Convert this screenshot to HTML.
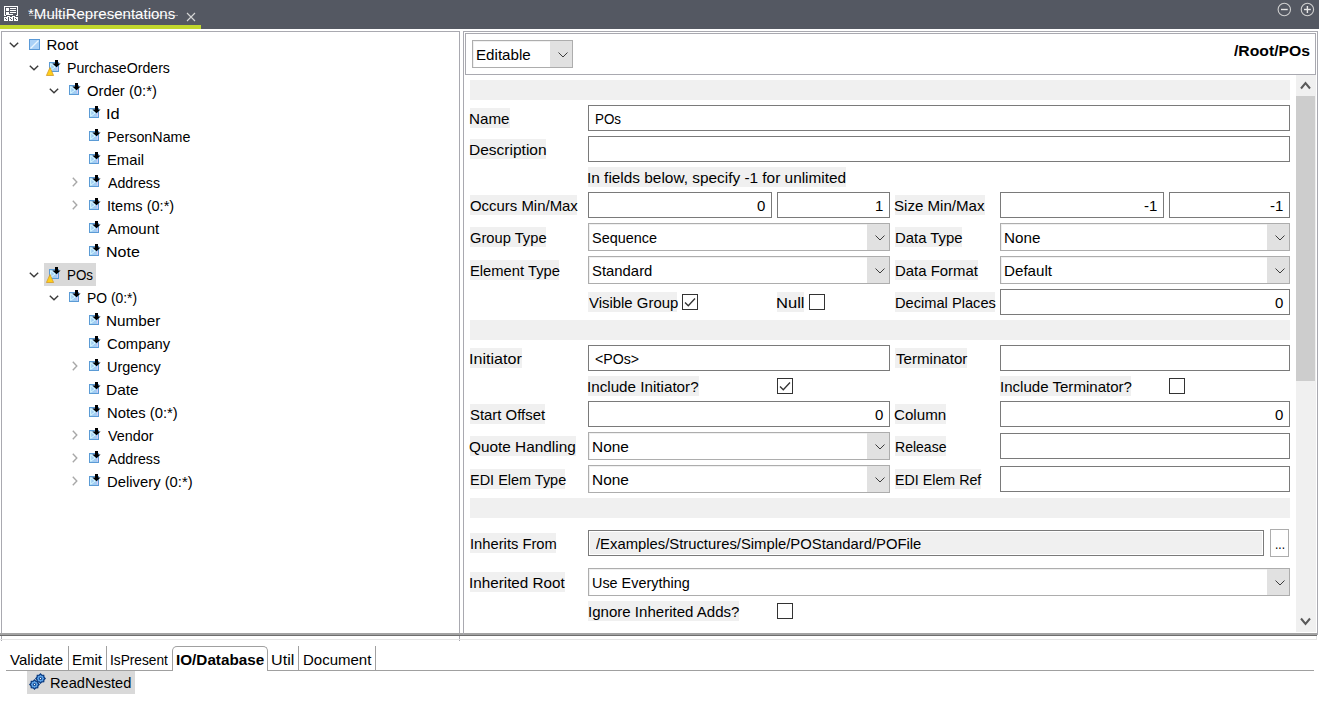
<!DOCTYPE html>
<html><head><meta charset="utf-8"><style>
html,body{margin:0;padding:0;width:1319px;height:722px;overflow:hidden;background:#fff;position:relative}
.a{position:absolute}
.t{font:15px/20px "Liberation Sans", sans-serif;white-space:nowrap;transform-origin:0 0}
svg{overflow:visible}
</style></head><body>
<div class="a" style="left:0px;top:0px;width:1319px;height:29px;background:#545862;"></div>
<div class="a" style="left:0px;top:25px;width:201px;height:4px;background:#c1d72e;"></div>
<svg class="a" style="left:0px;top:0px" width="24" height="24" viewBox="0 0 24 24" shape-rendering="crispEdges">
<path d="M4 6 H18 V7 H4 Z M4 6 H5 V15 H4 Z M17 6 H18 V15 H17 Z" fill="#fff"/>
<path d="M4 15 H6 V16 H4 Z M16 15 H18 V16 H16 Z M9 14 H13 V15 H9 Z M7 16 H10 V17 H7 Z M12 16 H15 V17 H12 Z" fill="#fff"/>
<rect x="6" y="8" width="3" height="3" fill="#fff"/><rect x="6" y="12" width="3" height="3" fill="#fff"/>
<rect x="10" y="8" width="6" height="1" fill="#fff"/><rect x="10" y="10" width="6" height="1" fill="#fff"/><rect x="10" y="12" width="6" height="1" fill="#fff"/>
<rect x="4" y="17" width="4" height="4" fill="#fff"/><rect x="9" y="17" width="4" height="4" fill="#fff"/><rect x="14" y="17" width="4" height="4" fill="#fff"/>
<rect x="5" y="18" width="1" height="1" fill="#545862"/><rect x="6" y="19" width="1" height="1" fill="#545862"/>
<rect x="10" y="18" width="1" height="1" fill="#545862"/><rect x="11" y="19" width="1" height="1" fill="#545862"/>
<rect x="15" y="18" width="1" height="1" fill="#545862"/><rect x="16" y="19" width="1" height="1" fill="#545862"/>
</svg>
<div class="a" style="left:29px;top:15px;width:149px;height:1px;background:rgba(220,220,220,0.55);"></div>
<svg class="a" style="left:186px;top:12px" width="10" height="10" viewBox="0 0 10 10">
<path d="M1 1 L9 9 M9 1 L1 9" stroke="#d6d6d6" stroke-width="1.1"/></svg>
<svg class="a" style="left:1270px;top:0px" width="49" height="20" viewBox="0 0 49 20">
<circle cx="14.3" cy="9.5" r="6.2" fill="none" stroke="#cfcfcf" stroke-width="1.1"/>
<line x1="11" y1="9.5" x2="17.7" y2="9.5" stroke="#e6e6e6" stroke-width="1.4"/>
<circle cx="37.4" cy="9.5" r="6.2" fill="none" stroke="#cfcfcf" stroke-width="1.1"/>
<line x1="34" y1="9.5" x2="40.8" y2="9.5" stroke="#e6e6e6" stroke-width="1.4"/>
<line x1="37.4" y1="6" x2="37.4" y2="13" stroke="#e6e6e6" stroke-width="1.4"/>
</svg>
<div class="a" style="left:1px;top:31px;width:459px;height:610px;box-sizing:border-box;border:1px solid #a9a9b0;border-bottom:none;"></div>
<div class="a" style="left:44px;top:263px;width:52px;height:23px;background:#d9d9d9;"></div>
<svg class="a" style="left:9px;top:42px" width="10" height="6" viewBox="0 0 10 6"><path d="M0.8 0.8 L5 4.8 L9.2 0.8" fill="none" stroke="#3a3a3a" stroke-width="1.4"/></svg>
<svg class="a" style="left:29px;top:39px" width="11" height="11" viewBox="0 0 11 11">
<rect x="0.5" y="0.5" width="10" height="10" fill="#a9d1f7" stroke="#5a9ad8"/>
<path d="M1.5 9.5 L9.5 1.5" stroke="#e8f6ff" stroke-width="1.2"/></svg>
<svg class="a" style="left:29px;top:65px" width="10" height="6" viewBox="0 0 10 6"><path d="M0.8 0.8 L5 4.8 L9.2 0.8" fill="none" stroke="#3a3a3a" stroke-width="1.4"/></svg>
<svg class="a" style="left:49px;top:60px" width="12" height="12" viewBox="0 0 12 12">
<rect x="0.5" y="2.5" width="9" height="9" fill="#a3cdf3" stroke="#5b9bd5"/>
<path d="M1.7 3.7 V10.3 M1.7 3.7 L6.3 7.2 M1.7 10.3 L6.3 6.8" fill="none" stroke="#d8fbff" stroke-width="1"/>
<path d="M8.5 10.5 V7" stroke="#d9c8f5" stroke-width="1"/>
<path d="M6 0 H9 V3.5 H11.6 L7.5 7.3 L3.4 3.5 H6 Z" fill="#000"/></svg>
<svg class="a" style="left:46px;top:67px" width="8" height="9" viewBox="0 0 8 9">
<path d="M4 0.5 L7.6 8.5 H0.4 Z" fill="#ffcf1a" stroke="#d49a2a" stroke-width="0.8"/></svg>
<svg class="a" style="left:49px;top:88px" width="10" height="6" viewBox="0 0 10 6"><path d="M0.8 0.8 L5 4.8 L9.2 0.8" fill="none" stroke="#3a3a3a" stroke-width="1.4"/></svg>
<svg class="a" style="left:69px;top:83px" width="12" height="12" viewBox="0 0 12 12">
<rect x="0.5" y="2.5" width="9" height="9" fill="#a3cdf3" stroke="#5b9bd5"/>
<path d="M1.7 3.7 V10.3 M1.7 3.7 L6.3 7.2 M1.7 10.3 L6.3 6.8" fill="none" stroke="#d8fbff" stroke-width="1"/>
<path d="M8.5 10.5 V7" stroke="#d9c8f5" stroke-width="1"/>
<path d="M6 0 H9 V3.5 H11.6 L7.5 7.3 L3.4 3.5 H6 Z" fill="#000"/></svg>
<svg class="a" style="left:89px;top:106px" width="12" height="12" viewBox="0 0 12 12">
<rect x="0.5" y="2.5" width="9" height="9" fill="#a3cdf3" stroke="#5b9bd5"/>
<path d="M1.7 3.7 V10.3 M1.7 3.7 L6.3 7.2 M1.7 10.3 L6.3 6.8" fill="none" stroke="#d8fbff" stroke-width="1"/>
<path d="M8.5 10.5 V7" stroke="#d9c8f5" stroke-width="1"/>
<path d="M6 0 H9 V3.5 H11.6 L7.5 7.3 L3.4 3.5 H6 Z" fill="#000"/></svg>
<svg class="a" style="left:89px;top:129px" width="12" height="12" viewBox="0 0 12 12">
<rect x="0.5" y="2.5" width="9" height="9" fill="#a3cdf3" stroke="#5b9bd5"/>
<path d="M1.7 3.7 V10.3 M1.7 3.7 L6.3 7.2 M1.7 10.3 L6.3 6.8" fill="none" stroke="#d8fbff" stroke-width="1"/>
<path d="M8.5 10.5 V7" stroke="#d9c8f5" stroke-width="1"/>
<path d="M6 0 H9 V3.5 H11.6 L7.5 7.3 L3.4 3.5 H6 Z" fill="#000"/></svg>
<svg class="a" style="left:89px;top:152px" width="12" height="12" viewBox="0 0 12 12">
<rect x="0.5" y="2.5" width="9" height="9" fill="#a3cdf3" stroke="#5b9bd5"/>
<path d="M1.7 3.7 V10.3 M1.7 3.7 L6.3 7.2 M1.7 10.3 L6.3 6.8" fill="none" stroke="#d8fbff" stroke-width="1"/>
<path d="M8.5 10.5 V7" stroke="#d9c8f5" stroke-width="1"/>
<path d="M6 0 H9 V3.5 H11.6 L7.5 7.3 L3.4 3.5 H6 Z" fill="#000"/></svg>
<svg class="a" style="left:72px;top:177px" width="6" height="10" viewBox="0 0 6 10"><path d="M0.8 0.8 L4.8 5 L0.8 9.2" fill="none" stroke="#a8a8a8" stroke-width="1.4"/></svg>
<svg class="a" style="left:89px;top:175px" width="12" height="12" viewBox="0 0 12 12">
<rect x="0.5" y="2.5" width="9" height="9" fill="#a3cdf3" stroke="#5b9bd5"/>
<path d="M1.7 3.7 V10.3 M1.7 3.7 L6.3 7.2 M1.7 10.3 L6.3 6.8" fill="none" stroke="#d8fbff" stroke-width="1"/>
<path d="M8.5 10.5 V7" stroke="#d9c8f5" stroke-width="1"/>
<path d="M6 0 H9 V3.5 H11.6 L7.5 7.3 L3.4 3.5 H6 Z" fill="#000"/></svg>
<svg class="a" style="left:72px;top:200px" width="6" height="10" viewBox="0 0 6 10"><path d="M0.8 0.8 L4.8 5 L0.8 9.2" fill="none" stroke="#a8a8a8" stroke-width="1.4"/></svg>
<svg class="a" style="left:89px;top:198px" width="12" height="12" viewBox="0 0 12 12">
<rect x="0.5" y="2.5" width="9" height="9" fill="#a3cdf3" stroke="#5b9bd5"/>
<path d="M1.7 3.7 V10.3 M1.7 3.7 L6.3 7.2 M1.7 10.3 L6.3 6.8" fill="none" stroke="#d8fbff" stroke-width="1"/>
<path d="M8.5 10.5 V7" stroke="#d9c8f5" stroke-width="1"/>
<path d="M6 0 H9 V3.5 H11.6 L7.5 7.3 L3.4 3.5 H6 Z" fill="#000"/></svg>
<svg class="a" style="left:89px;top:221px" width="12" height="12" viewBox="0 0 12 12">
<rect x="0.5" y="2.5" width="9" height="9" fill="#a3cdf3" stroke="#5b9bd5"/>
<path d="M1.7 3.7 V10.3 M1.7 3.7 L6.3 7.2 M1.7 10.3 L6.3 6.8" fill="none" stroke="#d8fbff" stroke-width="1"/>
<path d="M8.5 10.5 V7" stroke="#d9c8f5" stroke-width="1"/>
<path d="M6 0 H9 V3.5 H11.6 L7.5 7.3 L3.4 3.5 H6 Z" fill="#000"/></svg>
<svg class="a" style="left:89px;top:244px" width="12" height="12" viewBox="0 0 12 12">
<rect x="0.5" y="2.5" width="9" height="9" fill="#a3cdf3" stroke="#5b9bd5"/>
<path d="M1.7 3.7 V10.3 M1.7 3.7 L6.3 7.2 M1.7 10.3 L6.3 6.8" fill="none" stroke="#d8fbff" stroke-width="1"/>
<path d="M8.5 10.5 V7" stroke="#d9c8f5" stroke-width="1"/>
<path d="M6 0 H9 V3.5 H11.6 L7.5 7.3 L3.4 3.5 H6 Z" fill="#000"/></svg>
<svg class="a" style="left:29px;top:272px" width="10" height="6" viewBox="0 0 10 6"><path d="M0.8 0.8 L5 4.8 L9.2 0.8" fill="none" stroke="#3a3a3a" stroke-width="1.4"/></svg>
<svg class="a" style="left:49px;top:267px" width="12" height="12" viewBox="0 0 12 12">
<rect x="0.5" y="2.5" width="9" height="9" fill="#a3cdf3" stroke="#5b9bd5"/>
<path d="M1.7 3.7 V10.3 M1.7 3.7 L6.3 7.2 M1.7 10.3 L6.3 6.8" fill="none" stroke="#d8fbff" stroke-width="1"/>
<path d="M8.5 10.5 V7" stroke="#d9c8f5" stroke-width="1"/>
<path d="M6 0 H9 V3.5 H11.6 L7.5 7.3 L3.4 3.5 H6 Z" fill="#000"/></svg>
<svg class="a" style="left:46px;top:274px" width="8" height="9" viewBox="0 0 8 9">
<path d="M4 0.5 L7.6 8.5 H0.4 Z" fill="#ffcf1a" stroke="#d49a2a" stroke-width="0.8"/></svg>
<svg class="a" style="left:49px;top:295px" width="10" height="6" viewBox="0 0 10 6"><path d="M0.8 0.8 L5 4.8 L9.2 0.8" fill="none" stroke="#3a3a3a" stroke-width="1.4"/></svg>
<svg class="a" style="left:69px;top:290px" width="12" height="12" viewBox="0 0 12 12">
<rect x="0.5" y="2.5" width="9" height="9" fill="#a3cdf3" stroke="#5b9bd5"/>
<path d="M1.7 3.7 V10.3 M1.7 3.7 L6.3 7.2 M1.7 10.3 L6.3 6.8" fill="none" stroke="#d8fbff" stroke-width="1"/>
<path d="M8.5 10.5 V7" stroke="#d9c8f5" stroke-width="1"/>
<path d="M6 0 H9 V3.5 H11.6 L7.5 7.3 L3.4 3.5 H6 Z" fill="#000"/></svg>
<svg class="a" style="left:89px;top:313px" width="12" height="12" viewBox="0 0 12 12">
<rect x="0.5" y="2.5" width="9" height="9" fill="#a3cdf3" stroke="#5b9bd5"/>
<path d="M1.7 3.7 V10.3 M1.7 3.7 L6.3 7.2 M1.7 10.3 L6.3 6.8" fill="none" stroke="#d8fbff" stroke-width="1"/>
<path d="M8.5 10.5 V7" stroke="#d9c8f5" stroke-width="1"/>
<path d="M6 0 H9 V3.5 H11.6 L7.5 7.3 L3.4 3.5 H6 Z" fill="#000"/></svg>
<svg class="a" style="left:89px;top:336px" width="12" height="12" viewBox="0 0 12 12">
<rect x="0.5" y="2.5" width="9" height="9" fill="#a3cdf3" stroke="#5b9bd5"/>
<path d="M1.7 3.7 V10.3 M1.7 3.7 L6.3 7.2 M1.7 10.3 L6.3 6.8" fill="none" stroke="#d8fbff" stroke-width="1"/>
<path d="M8.5 10.5 V7" stroke="#d9c8f5" stroke-width="1"/>
<path d="M6 0 H9 V3.5 H11.6 L7.5 7.3 L3.4 3.5 H6 Z" fill="#000"/></svg>
<svg class="a" style="left:72px;top:361px" width="6" height="10" viewBox="0 0 6 10"><path d="M0.8 0.8 L4.8 5 L0.8 9.2" fill="none" stroke="#a8a8a8" stroke-width="1.4"/></svg>
<svg class="a" style="left:89px;top:359px" width="12" height="12" viewBox="0 0 12 12">
<rect x="0.5" y="2.5" width="9" height="9" fill="#a3cdf3" stroke="#5b9bd5"/>
<path d="M1.7 3.7 V10.3 M1.7 3.7 L6.3 7.2 M1.7 10.3 L6.3 6.8" fill="none" stroke="#d8fbff" stroke-width="1"/>
<path d="M8.5 10.5 V7" stroke="#d9c8f5" stroke-width="1"/>
<path d="M6 0 H9 V3.5 H11.6 L7.5 7.3 L3.4 3.5 H6 Z" fill="#000"/></svg>
<svg class="a" style="left:89px;top:382px" width="12" height="12" viewBox="0 0 12 12">
<rect x="0.5" y="2.5" width="9" height="9" fill="#a3cdf3" stroke="#5b9bd5"/>
<path d="M1.7 3.7 V10.3 M1.7 3.7 L6.3 7.2 M1.7 10.3 L6.3 6.8" fill="none" stroke="#d8fbff" stroke-width="1"/>
<path d="M8.5 10.5 V7" stroke="#d9c8f5" stroke-width="1"/>
<path d="M6 0 H9 V3.5 H11.6 L7.5 7.3 L3.4 3.5 H6 Z" fill="#000"/></svg>
<svg class="a" style="left:89px;top:405px" width="12" height="12" viewBox="0 0 12 12">
<rect x="0.5" y="2.5" width="9" height="9" fill="#a3cdf3" stroke="#5b9bd5"/>
<path d="M1.7 3.7 V10.3 M1.7 3.7 L6.3 7.2 M1.7 10.3 L6.3 6.8" fill="none" stroke="#d8fbff" stroke-width="1"/>
<path d="M8.5 10.5 V7" stroke="#d9c8f5" stroke-width="1"/>
<path d="M6 0 H9 V3.5 H11.6 L7.5 7.3 L3.4 3.5 H6 Z" fill="#000"/></svg>
<svg class="a" style="left:72px;top:430px" width="6" height="10" viewBox="0 0 6 10"><path d="M0.8 0.8 L4.8 5 L0.8 9.2" fill="none" stroke="#a8a8a8" stroke-width="1.4"/></svg>
<svg class="a" style="left:89px;top:428px" width="12" height="12" viewBox="0 0 12 12">
<rect x="0.5" y="2.5" width="9" height="9" fill="#a3cdf3" stroke="#5b9bd5"/>
<path d="M1.7 3.7 V10.3 M1.7 3.7 L6.3 7.2 M1.7 10.3 L6.3 6.8" fill="none" stroke="#d8fbff" stroke-width="1"/>
<path d="M8.5 10.5 V7" stroke="#d9c8f5" stroke-width="1"/>
<path d="M6 0 H9 V3.5 H11.6 L7.5 7.3 L3.4 3.5 H6 Z" fill="#000"/></svg>
<svg class="a" style="left:72px;top:453px" width="6" height="10" viewBox="0 0 6 10"><path d="M0.8 0.8 L4.8 5 L0.8 9.2" fill="none" stroke="#a8a8a8" stroke-width="1.4"/></svg>
<svg class="a" style="left:89px;top:451px" width="12" height="12" viewBox="0 0 12 12">
<rect x="0.5" y="2.5" width="9" height="9" fill="#a3cdf3" stroke="#5b9bd5"/>
<path d="M1.7 3.7 V10.3 M1.7 3.7 L6.3 7.2 M1.7 10.3 L6.3 6.8" fill="none" stroke="#d8fbff" stroke-width="1"/>
<path d="M8.5 10.5 V7" stroke="#d9c8f5" stroke-width="1"/>
<path d="M6 0 H9 V3.5 H11.6 L7.5 7.3 L3.4 3.5 H6 Z" fill="#000"/></svg>
<svg class="a" style="left:72px;top:476px" width="6" height="10" viewBox="0 0 6 10"><path d="M0.8 0.8 L4.8 5 L0.8 9.2" fill="none" stroke="#a8a8a8" stroke-width="1.4"/></svg>
<svg class="a" style="left:89px;top:474px" width="12" height="12" viewBox="0 0 12 12">
<rect x="0.5" y="2.5" width="9" height="9" fill="#a3cdf3" stroke="#5b9bd5"/>
<path d="M1.7 3.7 V10.3 M1.7 3.7 L6.3 7.2 M1.7 10.3 L6.3 6.8" fill="none" stroke="#d8fbff" stroke-width="1"/>
<path d="M8.5 10.5 V7" stroke="#d9c8f5" stroke-width="1"/>
<path d="M6 0 H9 V3.5 H11.6 L7.5 7.3 L3.4 3.5 H6 Z" fill="#000"/></svg>
<div class="a" style="left:0px;top:633px;width:1317px;height:2px;background:#a3a3a3;"></div>
<div class="a" style="left:0px;top:635px;width:1317px;height:1px;background:#6e6e6e;"></div>
<div class="a" style="left:0px;top:639px;width:1317px;height:1px;background:#e6e6e6;"></div>
<div class="a" style="left:1316px;top:636px;width:1px;height:4px;background:#e6e6e6;"></div>
<div class="a" style="left:6px;top:670px;width:1308px;height:1px;background:#a0a0a0;"></div>
<div class="a" style="left:68px;top:646px;width:1px;height:25px;background:#a0a0a0;"></div>
<div class="a" style="left:106px;top:646px;width:1px;height:25px;background:#a0a0a0;"></div>
<div class="a" style="left:298px;top:646px;width:1px;height:25px;background:#a0a0a0;"></div>
<div class="a" style="left:375px;top:646px;width:1px;height:25px;background:#a0a0a0;"></div>
<div class="a" style="left:172px;top:646px;width:96px;height:25px;box-sizing:border-box;border:1px solid #a0a0a0;border-bottom:none;border-radius:5px 5px 0 0;background:#fff"></div>
<div class="a" style="left:27px;top:671px;width:108px;height:23px;background:#d9d9d9;"></div>
<svg class="a" style="left:26px;top:670px" width="24" height="24" viewBox="0 0 24 24">
<g transform="translate(8.5,14.5)"><path d="M0 -4.6 L1.2 -3.4 L3.2 -3.2 L3.4 -1.2 L4.6 0 L3.4 1.2 L3.2 3.2 L1.2 3.4 L0 4.6 L-1.2 3.4 L-3.2 3.2 L-3.4 1.2 L-4.6 0 L-3.4 -1.2 L-3.2 -3.2 L-1.2 -3.4 Z" fill="#5aa0e6" stroke="#0a3a80" stroke-width="1.3"/><circle r="1.6" fill="#0a3a80"/><circle r="0.7" fill="#fff"/></g>
<g transform="translate(14.5,8.5)"><path d="M0 -4.6 L1.2 -3.4 L3.2 -3.2 L3.4 -1.2 L4.6 0 L3.4 1.2 L3.2 3.2 L1.2 3.4 L0 4.6 L-1.2 3.4 L-3.2 3.2 L-3.4 1.2 L-4.6 0 L-3.4 -1.2 L-3.2 -3.2 L-1.2 -3.4 Z" fill="#5aa0e6" stroke="#0a3a80" stroke-width="1.3"/><circle r="1.6" fill="#0a3a80"/><circle r="0.7" fill="#fff"/></g>
</svg>
<div class="a" style="left:463px;top:31px;width:855px;height:604px;box-sizing:border-box;border:1px solid #a9a9b0;border-bottom:none;"></div>
<div class="a" style="left:465px;top:33px;width:851px;height:42px;box-sizing:border-box;border:1px solid #a9a9b0;"></div>
<div class="a" style="left:472px;top:40px;width:101px;height:28px;background:#fff;box-sizing:border-box;border:1px solid #adadad;box-shadow:inset 1px 1px 0 #f0f0f0;"></div>
<div class="a" style="left:550px;top:41px;width:22px;height:26px;background:#e1e1e1;"></div>
<svg class="a" style="left:558px;top:52px" width="10" height="6" viewBox="0 0 10 6"><path d="M0.5 0.5 L5 5 L9.5 0.5" fill="none" stroke="#3c3c3c" stroke-width="1"/></svg>
<div class="a" style="left:1296px;top:75px;width:20px;height:557px;background:#f0f0f0;"></div>
<div class="a" style="left:1296px;top:96px;width:19px;height:285px;background:#cdcdcd;"></div>
<svg class="a" style="left:1300px;top:81px" width="11" height="9" viewBox="0 0 11 9"><path d="M1 7.5 L5.5 2 L10 7.5" fill="none" stroke="#5a5a5a" stroke-width="2"/></svg>
<svg class="a" style="left:1300px;top:617px" width="11" height="9" viewBox="0 0 11 9"><path d="M1 1.5 L5.5 7 L10 1.5" fill="none" stroke="#5a5a5a" stroke-width="2"/></svg>
<div class="a" style="left:470px;top:80px;width:820px;height:20px;background:#f0f0f0;"></div>
<div class="a" style="left:470px;top:320px;width:820px;height:20px;background:#f0f0f0;"></div>
<div class="a" style="left:470px;top:498px;width:820px;height:20px;background:#f0f0f0;"></div>
<div class="a" style="left:470px;top:108px;width:40px;height:20px;background:#f0f0f0;"></div>
<div class="a" style="left:588px;top:105px;width:702px;height:26px;background:#fff;box-sizing:border-box;border:1px solid #7a7a7a;"></div>
<div class="a" style="left:470px;top:139px;width:76px;height:20px;background:#f0f0f0;"></div>
<div class="a" style="left:588px;top:136px;width:702px;height:26px;background:#fff;box-sizing:border-box;border:1px solid #7a7a7a;"></div>
<div class="a" style="left:588px;top:167px;width:258px;height:20px;background:#f0f0f0;"></div>
<div class="a" style="left:470px;top:195px;width:107px;height:20px;background:#f0f0f0;"></div>
<div class="a" style="left:588px;top:192px;width:184px;height:26px;background:#fff;box-sizing:border-box;border:1px solid #7a7a7a;"></div>
<div class="a" style="left:777px;top:192px;width:113px;height:26px;background:#fff;box-sizing:border-box;border:1px solid #7a7a7a;"></div>
<div class="a" style="left:895px;top:195px;width:90px;height:20px;background:#f0f0f0;"></div>
<div class="a" style="left:1000px;top:192px;width:164px;height:26px;background:#fff;box-sizing:border-box;border:1px solid #7a7a7a;"></div>
<div class="a" style="left:1169px;top:192px;width:121px;height:26px;background:#fff;box-sizing:border-box;border:1px solid #7a7a7a;"></div>
<div class="a" style="left:470px;top:227px;width:76px;height:20px;background:#f0f0f0;"></div>
<div class="a" style="left:588px;top:223px;width:302px;height:28px;background:#fff;box-sizing:border-box;border:1px solid #adadad;box-shadow:inset 1px 1px 0 #f0f0f0;"></div>
<div class="a" style="left:867px;top:224px;width:22px;height:26px;background:#e1e1e1;"></div>
<svg class="a" style="left:875px;top:235px" width="10" height="6" viewBox="0 0 10 6"><path d="M0.5 0.5 L5 5 L9.5 0.5" fill="none" stroke="#3c3c3c" stroke-width="1"/></svg>
<div class="a" style="left:895px;top:227px;width:67px;height:20px;background:#f0f0f0;"></div>
<div class="a" style="left:1000px;top:223px;width:290px;height:28px;background:#fff;box-sizing:border-box;border:1px solid #adadad;box-shadow:inset 1px 1px 0 #f0f0f0;"></div>
<div class="a" style="left:1267px;top:224px;width:22px;height:26px;background:#e1e1e1;"></div>
<svg class="a" style="left:1275px;top:235px" width="10" height="6" viewBox="0 0 10 6"><path d="M0.5 0.5 L5 5 L9.5 0.5" fill="none" stroke="#3c3c3c" stroke-width="1"/></svg>
<div class="a" style="left:470px;top:260px;width:89px;height:20px;background:#f0f0f0;"></div>
<div class="a" style="left:588px;top:256px;width:302px;height:28px;background:#fff;box-sizing:border-box;border:1px solid #adadad;box-shadow:inset 1px 1px 0 #f0f0f0;"></div>
<div class="a" style="left:867px;top:257px;width:22px;height:26px;background:#e1e1e1;"></div>
<svg class="a" style="left:875px;top:268px" width="10" height="6" viewBox="0 0 10 6"><path d="M0.5 0.5 L5 5 L9.5 0.5" fill="none" stroke="#3c3c3c" stroke-width="1"/></svg>
<div class="a" style="left:895px;top:260px;width:83px;height:20px;background:#f0f0f0;"></div>
<div class="a" style="left:1000px;top:256px;width:290px;height:28px;background:#fff;box-sizing:border-box;border:1px solid #adadad;box-shadow:inset 1px 1px 0 #f0f0f0;"></div>
<div class="a" style="left:1267px;top:257px;width:22px;height:26px;background:#e1e1e1;"></div>
<svg class="a" style="left:1275px;top:268px" width="10" height="6" viewBox="0 0 10 6"><path d="M0.5 0.5 L5 5 L9.5 0.5" fill="none" stroke="#3c3c3c" stroke-width="1"/></svg>
<div class="a" style="left:588px;top:292px;width:89px;height:20px;background:#f0f0f0;"></div>
<div class="a" style="left:682px;top:294px;width:16px;height:16px;background:#fff;box-sizing:border-box;border:1px solid #333;"></div>
<svg class="a" style="left:682px;top:294px" width="16" height="16" viewBox="0 0 16 16"><path d="M3 8.5 L6.3 11.8 L13 4.5" fill="none" stroke="#333" stroke-width="1.3"/></svg>
<div class="a" style="left:777px;top:292px;width:27px;height:20px;background:#f0f0f0;"></div>
<div class="a" style="left:809px;top:294px;width:16px;height:16px;background:#fff;box-sizing:border-box;border:1px solid #333;"></div>
<div class="a" style="left:895px;top:292px;width:100px;height:20px;background:#f0f0f0;"></div>
<div class="a" style="left:1000px;top:289px;width:290px;height:26px;background:#fff;box-sizing:border-box;border:1px solid #7a7a7a;"></div>
<div class="a" style="left:470px;top:348px;width:52px;height:20px;background:#f0f0f0;"></div>
<div class="a" style="left:588px;top:345px;width:302px;height:26px;background:#fff;box-sizing:border-box;border:1px solid #7a7a7a;"></div>
<div class="a" style="left:895px;top:348px;width:72px;height:20px;background:#f0f0f0;"></div>
<div class="a" style="left:1000px;top:345px;width:290px;height:26px;background:#fff;box-sizing:border-box;border:1px solid #7a7a7a;"></div>
<div class="a" style="left:588px;top:376px;width:111px;height:20px;background:#f0f0f0;"></div>
<div class="a" style="left:777px;top:378px;width:16px;height:16px;background:#fff;box-sizing:border-box;border:1px solid #333;"></div>
<svg class="a" style="left:777px;top:378px" width="16" height="16" viewBox="0 0 16 16"><path d="M3 8.5 L6.3 11.8 L13 4.5" fill="none" stroke="#333" stroke-width="1.3"/></svg>
<div class="a" style="left:1000px;top:376px;width:131px;height:20px;background:#f0f0f0;"></div>
<div class="a" style="left:1169px;top:378px;width:16px;height:16px;background:#fff;box-sizing:border-box;border:1px solid #333;"></div>
<div class="a" style="left:470px;top:404px;width:75px;height:20px;background:#f0f0f0;"></div>
<div class="a" style="left:588px;top:401px;width:302px;height:26px;background:#fff;box-sizing:border-box;border:1px solid #7a7a7a;"></div>
<div class="a" style="left:895px;top:404px;width:51px;height:20px;background:#f0f0f0;"></div>
<div class="a" style="left:1000px;top:401px;width:290px;height:26px;background:#fff;box-sizing:border-box;border:1px solid #7a7a7a;"></div>
<div class="a" style="left:470px;top:436px;width:106px;height:20px;background:#f0f0f0;"></div>
<div class="a" style="left:588px;top:432px;width:302px;height:28px;background:#fff;box-sizing:border-box;border:1px solid #adadad;box-shadow:inset 1px 1px 0 #f0f0f0;"></div>
<div class="a" style="left:867px;top:433px;width:22px;height:26px;background:#e1e1e1;"></div>
<svg class="a" style="left:875px;top:444px" width="10" height="6" viewBox="0 0 10 6"><path d="M0.5 0.5 L5 5 L9.5 0.5" fill="none" stroke="#3c3c3c" stroke-width="1"/></svg>
<div class="a" style="left:895px;top:436px;width:51px;height:20px;background:#f0f0f0;"></div>
<div class="a" style="left:1000px;top:433px;width:290px;height:26px;background:#fff;box-sizing:border-box;border:1px solid #7a7a7a;"></div>
<div class="a" style="left:470px;top:469px;width:95px;height:20px;background:#f0f0f0;"></div>
<div class="a" style="left:588px;top:465px;width:302px;height:28px;background:#fff;box-sizing:border-box;border:1px solid #adadad;box-shadow:inset 1px 1px 0 #f0f0f0;"></div>
<div class="a" style="left:867px;top:466px;width:22px;height:26px;background:#e1e1e1;"></div>
<svg class="a" style="left:875px;top:477px" width="10" height="6" viewBox="0 0 10 6"><path d="M0.5 0.5 L5 5 L9.5 0.5" fill="none" stroke="#3c3c3c" stroke-width="1"/></svg>
<div class="a" style="left:895px;top:469px;width:86px;height:20px;background:#f0f0f0;"></div>
<div class="a" style="left:1000px;top:466px;width:290px;height:26px;background:#fff;box-sizing:border-box;border:1px solid #7a7a7a;"></div>
<div class="a" style="left:470px;top:533px;width:86px;height:20px;background:#f0f0f0;"></div>
<div class="a" style="left:588px;top:530px;width:676px;height:26px;background:#f0f0f0;box-sizing:border-box;border:1px solid #7a7a7a;box-shadow:inset 0 0 0 1px #fff;"></div>
<div class="a" style="left:1270px;top:529px;width:19px;height:28px;background:#fff;box-sizing:border-box;border:1px solid #adadad;"></div>
<div class="a" style="left:470px;top:572px;width:95px;height:20px;background:#f0f0f0;"></div>
<div class="a" style="left:588px;top:568px;width:702px;height:28px;background:#fff;box-sizing:border-box;border:1px solid #adadad;box-shadow:inset 1px 1px 0 #f0f0f0;"></div>
<div class="a" style="left:1267px;top:569px;width:22px;height:26px;background:#e1e1e1;"></div>
<svg class="a" style="left:1275px;top:580px" width="10" height="6" viewBox="0 0 10 6"><path d="M0.5 0.5 L5 5 L9.5 0.5" fill="none" stroke="#3c3c3c" stroke-width="1"/></svg>
<div class="a" style="left:588px;top:601px;width:151px;height:20px;background:#f0f0f0;"></div>
<div class="a" style="left:777px;top:603px;width:16px;height:16px;background:#fff;box-sizing:border-box;border:1px solid #333;"></div>
<div class="a t" style="top:4px;color:#fff;left:28.00px;transform:scaleX(1.0034);">*MultiRepresentations</div>
<div class="a t" style="top:35px;color:#000;left:46.50px;">Root</div>
<div class="a t" style="top:58px;color:#000;left:66.56px;transform:scaleX(0.9426);">PurchaseOrders</div>
<div class="a t" style="top:81px;color:#000;left:86.51px;transform:scaleX(0.9855);">Order (0:*)</div>
<div class="a t" style="top:104px;color:#000;left:106.41px;transform:scaleX(1.0909);">Id</div>
<div class="a t" style="top:127px;color:#000;left:106.55px;transform:scaleX(0.9535);">PersonName</div>
<div class="a t" style="top:150px;color:#000;left:106.51px;transform:scaleX(0.9861);">Email</div>
<div class="a t" style="top:173px;color:#000;left:107.50px;transform:scaleX(0.9455);">Address</div>
<div class="a t" style="top:196px;color:#000;left:106.53px;transform:scaleX(0.9706);">Items (0:*)</div>
<div class="a t" style="top:219px;color:#000;left:107.50px;">Amount</div>
<div class="a t" style="top:242px;color:#000;left:106.43px;transform:scaleX(1.0667);">Note</div>
<div class="a t" style="top:265px;color:#000;left:66.61px;transform:scaleX(0.8929);">POs</div>
<div class="a t" style="top:288px;color:#000;left:86.58px;transform:scaleX(0.9245);">PO (0:*)</div>
<div class="a t" style="top:311px;color:#000;left:106.48px;transform:scaleX(1.0192);">Number</div>
<div class="a t" style="top:334px;color:#000;left:106.52px;transform:scaleX(0.9841);">Company</div>
<div class="a t" style="top:357px;color:#000;left:106.54px;transform:scaleX(0.9636);">Urgency</div>
<div class="a t" style="top:380px;color:#000;left:106.47px;transform:scaleX(1.0333);">Date</div>
<div class="a t" style="top:403px;color:#000;left:106.51px;transform:scaleX(0.9857);">Notes (0:*)</div>
<div class="a t" style="top:426px;color:#000;left:107.50px;transform:scaleX(0.9583);">Vendor</div>
<div class="a t" style="top:449px;color:#000;left:107.50px;transform:scaleX(0.9455);">Address</div>
<div class="a t" style="top:472px;color:#000;left:106.51px;transform:scaleX(0.9882);">Delivery (0:*)</div>
<div class="a t" style="top:650px;color:#000;left:10.00px;">Validate</div>
<div class="a t" style="top:650px;color:#000;left:72.00px;">Emit</div>
<div class="a t" style="top:650px;color:#000;left:109.59px;transform:scaleX(0.9127);">IsPresent</div>
<div class="a t" style="top:650px;color:#000;font-weight:bold;left:175.98px;transform:scaleX(1.0176);">IO/Database</div>
<div class="a t" style="top:650px;color:#000;left:271.43px;transform:scaleX(1.0750);">Util</div>
<div class="a t" style="top:650px;color:#000;left:303.00px;">Document</div>
<div class="a t" style="top:673px;color:#000;left:50.02px;transform:scaleX(0.9756);">ReadNested</div>
<div class="a t" style="top:45px;color:#000;left:475.99px;transform:scaleX(1.0094);">Editable</div>
<div class="a t" style="top:41px;color:#000;font-weight:bold;left:1234.00px;transform:scaleX(1.0486);">/Root/POs</div>
<div class="a t" style="top:109px;color:#000;left:469.49px;transform:scaleX(1.0128);">Name</div>
<div class="a t" style="top:109px;color:#000;left:595.11px;transform:scaleX(0.8929);">POs</div>
<div class="a t" style="top:140px;color:#000;left:469.47px;transform:scaleX(1.0342);">Description</div>
<div class="a t" style="top:168px;color:#000;left:587.47px;transform:scaleX(1.0259);">In fields below, specify -1 for unlimited</div>
<div class="a t" style="top:196px;color:#000;left:469.50px;transform:scaleX(0.9953);">Occurs Min/Max</div>
<div class="a t" style="top:196px;color:#000;left:757.00px;">0</div>
<div class="a t" style="top:196px;color:#000;left:875.00px;">1</div>
<div class="a t" style="top:196px;color:#000;left:894.49px;transform:scaleX(1.0056);">Size Min/Max</div>
<div class="a t" style="top:196px;color:#000;left:1144.00px;">-1</div>
<div class="a t" style="top:196px;color:#000;left:1270.00px;">-1</div>
<div class="a t" style="top:228px;color:#000;left:469.52px;transform:scaleX(0.9805);">Group Type</div>
<div class="a t" style="top:228px;color:#000;left:592.04px;transform:scaleX(0.9621);">Sequence</div>
<div class="a t" style="top:228px;color:#000;left:894.51px;transform:scaleX(0.9925);">Data Type</div>
<div class="a t" style="top:228px;color:#000;left:1003.99px;transform:scaleX(1.0147);">None</div>
<div class="a t" style="top:261px;color:#000;left:469.52px;transform:scaleX(0.9833);">Element Type</div>
<div class="a t" style="top:261px;color:#000;left:592.01px;transform:scaleX(0.9915);">Standard</div>
<div class="a t" style="top:261px;color:#000;left:894.51px;transform:scaleX(0.9940);">Data Format</div>
<div class="a t" style="top:261px;color:#000;left:1003.99px;transform:scaleX(1.0106);">Default</div>
<div class="a t" style="top:293px;color:#000;left:588.50px;transform:scaleX(0.9944);">Visible Group</div>
<div class="a t" style="top:293px;color:#000;left:776.40px;transform:scaleX(1.1042);">Null</div>
<div class="a t" style="top:293px;color:#000;left:894.52px;transform:scaleX(0.9755);">Decimal Places</div>
<div class="a t" style="top:293px;color:#000;left:1275.00px;">0</div>
<div class="a t" style="top:349px;color:#000;left:469.43px;transform:scaleX(1.0729);">Initiator</div>
<div class="a t" style="top:349px;color:#000;left:595.06px;transform:scaleX(0.9444);">&lt;POs&gt;</div>
<div class="a t" style="top:349px;color:#000;left:895.50px;transform:scaleX(1.0070);">Terminator</div>
<div class="a t" style="top:377px;color:#000;left:587.49px;transform:scaleX(1.0138);">Include Initiator?</div>
<div class="a t" style="top:377px;color:#000;left:999.50px;transform:scaleX(1.0038);">Include Terminator?</div>
<div class="a t" style="top:405px;color:#000;left:469.51px;transform:scaleX(0.9933);">Start Offset</div>
<div class="a t" style="top:405px;color:#000;left:875.00px;">0</div>
<div class="a t" style="top:405px;color:#000;left:894.49px;transform:scaleX(1.0100);">Column</div>
<div class="a t" style="top:405px;color:#000;left:1275.00px;">0</div>
<div class="a t" style="top:437px;color:#000;left:469.48px;transform:scaleX(1.0243);">Quote Handling</div>
<div class="a t" style="top:437px;color:#000;left:591.97px;transform:scaleX(1.0294);">None</div>
<div class="a t" style="top:437px;color:#000;left:894.56px;transform:scaleX(0.9352);">Release</div>
<div class="a t" style="top:470px;color:#000;left:469.54px;transform:scaleX(0.9643);">EDI Elem Type</div>
<div class="a t" style="top:470px;color:#000;left:591.97px;transform:scaleX(1.0294);">None</div>
<div class="a t" style="top:470px;color:#000;left:894.55px;transform:scaleX(0.9500);">EDI Elem Ref</div>
<div class="a t" style="top:534px;color:#000;left:469.52px;transform:scaleX(0.9828);">Inherits From</div>
<div class="a t" style="top:534px;color:#000;left:596.00px;transform:scaleX(0.9878);">/Examples/Structures/Simple/POStandard/POFile</div>
<div class="a t" style="top:534px;color:#000;left:1275.20px;transform:scaleX(0.8000);">...</div>
<div class="a t" style="top:573px;color:#000;left:469.48px;transform:scaleX(1.0161);">Inherited Root</div>
<div class="a t" style="top:573px;color:#000;left:592.04px;transform:scaleX(0.9600);">Use Everything</div>
<div class="a t" style="top:602px;color:#000;left:587.50px;transform:scaleX(1.0033);">Ignore Inherited Adds?</div>
</body></html>
